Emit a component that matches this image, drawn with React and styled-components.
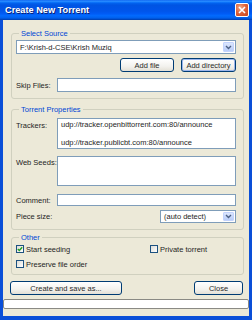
import styled, { createGlobalStyle } from "styled-components";

const GlobalStyle = createGlobalStyle`
  html, body { margin: 0; padding: 0; background: #ffffff; }
  body {
    font-family: "Liberation Sans", Arial, sans-serif;
    font-size: 7.5px;
    color: #1e1e1e;
  }
  * { box-sizing: border-box; }
`;

const Window = styled.div`
  width: 252px;
  height: 320px;
  display: flex;
  flex-direction: column;
  background: #0a4fd8;
`;

const TitleBar = styled.div`
  height: 20px;
  flex: none;
  display: flex;
  align-items: center;
  justify-content: space-between;
  padding: 0 3px 0 5px;
  background: linear-gradient(
    #0058ee 0%,
    #3593ff 5%,
    #127dff 10%,
    #0262ee 16%,
    #0054e3 26%,
    #0055eb 56%,
    #005bf5 68%,
    #026afe 78%,
    #0062ef 88%,
    #0052d6 94%,
    #003ca8 100%
  );
`;

const Title = styled.span`
  color: #ffffff;
  font-family: "Liberation Sans", Arial, sans-serif;
  font-weight: bold;
  font-size: 9.2px;
  text-shadow: 1px 1px 0 #0a1f72;
`;

const CloseButton = styled.div`
  width: 14px;
  height: 14px;
  border: 1px solid #ffffff;
  border-radius: 2px;
  background: radial-gradient(circle at 35% 30%, #f2a98a 0%, #e0643a 45%, #c7441d 100%);
  display: flex;
  align-items: center;
  justify-content: center;
`;

const Frame = styled.div`
  flex: 1;
  display: flex;
  flex-direction: column;
  padding: 0 3px 4px 3px;
`;

const Body = styled.div`
  flex: 1;
  background: #ece9d8;
  display: flex;
  flex-direction: column;
`;

const Groups = styled.div`
  display: flex;
  flex-direction: column;
  gap: 3px;
  padding: 9px 5px 0 8px;
`;

const Group = styled.fieldset`
  margin: 0;
  margin-top: ${({ $top }) => $top || 0}px;
  border: 1px solid #d0d0bf;
  border-radius: 3px;
  padding: ${({ $pad }) => $pad};
  display: flex;
  flex-direction: column;
  gap: ${({ $gap }) => $gap || 0}px;
`;

const Legend = styled.legend`
  color: #0046d5;
  font-size: 7.5px;
  line-height: 9px;
  padding: 0 2px;
  margin-left: 3px;
`;

const ComboBox = styled.div`
  height: ${({ $h }) => $h}px;
  width: ${({ $w }) => ($w ? `${$w}px` : "auto")};
  margin-left: ${({ $ml }) => ($ml ? "auto" : "0")};
  background: #ffffff;
  border: 1px solid #7f9db9;
  display: flex;
  align-items: stretch;
  padding: 1px;
`;

const ComboText = styled.div`
  flex: 1;
  display: flex;
  align-items: center;
  padding-left: 2px;
  white-space: nowrap;
`;

const ComboArrow = styled.div`
  width: 11px;
  border-radius: 1px;
  background: linear-gradient(#dbe6fd, #b9cdf9);
  border: 1px solid #c3d3fd;
  display: flex;
  align-items: center;
  justify-content: center;
`;

const ButtonRow = styled.div`
  display: flex;
  justify-content: flex-end;
  gap: 7px;
  margin-top: 4px;
`;

const Button = styled.div`
  width: ${({ $w }) => $w}px;
  height: 14px;
  border: 1px solid #003c74;
  border-radius: 3px;
  background: linear-gradient(#ffffff 0%, #f3f2ee 60%, #e3e0d6 100%);
  box-shadow: ${({ $focus }) => ($focus ? "inset 0 0 0 1px #9cb6ec" : "none")};
  display: flex;
  align-items: center;
  justify-content: center;
  white-space: nowrap;
  color: #2a2a2a;
`;

const FieldRow = styled.div`
  display: grid;
  grid-template-columns: 41px 1fr;
  align-items: ${({ $top }) => ($top ? "start" : "center")};
  margin-top: ${({ $mt }) => $mt || 0}px;
`;

const Label = styled.div`
  padding-top: ${({ $pt }) => $pt || 0}px;
  white-space: nowrap;
`;

const TextBox = styled.div`
  height: ${({ $h }) => $h}px;
  background: #ffffff;
  border: 1px solid #7f9db9;
  padding: 2px 3px;
  line-height: 8.8px;
  white-space: pre;
  overflow: hidden;
`;

const CheckGrid = styled.div`
  display: grid;
  grid-template-columns: 134px 1fr;
  row-gap: 5px;
`;

const CheckItem = styled.div`
  display: flex;
  align-items: center;
  gap: 2px;
  height: 10px;
`;

const Box = styled.div`
  width: 8px;
  height: 8px;
  border: 1px solid #1c5180;
  background: linear-gradient(135deg, #dcdcd7, #ffffff);
  display: flex;
  align-items: center;
  justify-content: center;
`;

const Footer = styled.div`
  display: flex;
  justify-content: space-between;
  padding: 6px 6px 0 7px;
`;

const Progress = styled.div`
  margin-top: 4px;
  height: 10px;
  background: #ffffff;
  border: 1px solid #8a8a84;
  border-radius: 2px;
`;

const Chevron = () => (
  <svg width="7" height="5" viewBox="0 0 7 5">
    <path d="M1 1 L3.5 3.5 L6 1" fill="none" stroke="#4d6185" strokeWidth="1.4" />
  </svg>
);

const Check = ({ on, label }) => (
  <CheckItem>
    <Box>
      {on && (
        <svg width="6" height="6" viewBox="0 0 6 6">
          <path d="M0.8 3 L2.3 4.5 L5.2 1.2" fill="none" stroke="#21a121" strokeWidth="1.4" />
        </svg>
      )}
    </Box>
    {label}
  </CheckItem>
);

export default function App() {
  return (
    <>
      <GlobalStyle />
      <Window>
        <TitleBar>
          <Title>Create New Torrent</Title>
          <CloseButton>
            <svg width="8" height="8" viewBox="0 0 8 8">
              <path d="M1 1 L7 7 M7 1 L1 7" stroke="#ffffff" strokeWidth="1.6" />
            </svg>
          </CloseButton>
        </TitleBar>
        <Frame>
          <Body>
            <Groups>
              <Group $pad="2px 7px 6px 4px">
                <Legend>Select Source</Legend>
                <ComboBox $h={14}>
                  <ComboText>F:\Krish-d-CSE\Krish Muziq</ComboText>
                  <ComboArrow>
                    <Chevron />
                  </ComboArrow>
                </ComboBox>
                <ButtonRow>
                  <Button $w={54}>Add file</Button>
                  <Button $w={55} $focus>
                    Add directory
                  </Button>
                </ButtonRow>
                <FieldRow $mt={6}>
                  <Label>Skip Files:</Label>
                  <TextBox $h={14} />
                </FieldRow>
              </Group>

              <Group $top={3} $pad="4px 7px 6px 4px" $gap={7}>
                <Legend>Torrent Properties</Legend>
                <FieldRow $top>
                  <Label $pt={3}>Trackers:</Label>
                  <TextBox $h={31}>
                    {"udp://tracker.openbittorrent.com:80/announce\n\nudp://tracker.publicbt.com:80/announce"}
                  </TextBox>
                </FieldRow>
                <FieldRow $top>
                  <Label $pt={2}>Web Seeds:</Label>
                  <TextBox $h={30} />
                </FieldRow>
                <FieldRow $mt={1}>
                  <Label>Comment:</Label>
                  <TextBox $h={12} />
                </FieldRow>
                <FieldRow $mt={-3}>
                  <Label>Piece size:</Label>
                  <ComboBox $h={13} $w={76} $ml>
                    <ComboText>(auto detect)</ComboText>
                    <ComboArrow>
                      <Chevron />
                    </ComboArrow>
                  </ComboBox>
                </FieldRow>
              </Group>

              <Group $pad="2px 4px 5px 4px">
                <Legend>Other</Legend>
                <CheckGrid>
                  <Check on label="Start seeding" />
                  <Check label="Private torrent" />
                  <Check label="Preserve file order" />
                </CheckGrid>
              </Group>
            </Groups>
            <Footer>
              <Button $w={112}>Create and save as...</Button>
              <Button $w={49}>Close</Button>
            </Footer>
            <Progress />
          </Body>
        </Frame>
      </Window>
    </>
  );
}
